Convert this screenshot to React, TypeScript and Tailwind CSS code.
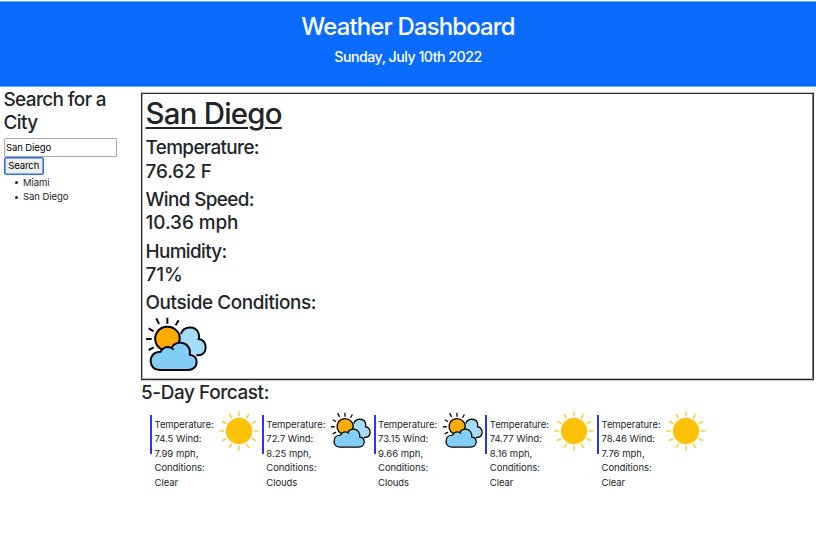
import React from "react";

const forecast = [
  { lines: ["Temperature:", "74.5 Wind:", "7.99 mph,", "Conditions:", "Clear"], clear: true },
  { lines: ["Temperature:", "72.7 Wind:", "8.25 mph,", "Conditions:", "Clouds"], clear: false },
  { lines: ["Temperature:", "73.15 Wind:", "9.66 mph,", "Conditions:", "Clouds"], clear: false },
  { lines: ["Temperature:", "74.77 Wind:", "8.16 mph,", "Conditions:", "Clear"], clear: true },
  { lines: ["Temperature:", "78.46 Wind:", "7.76 mph,", "Conditions:", "Clear"], clear: true },
];

function CloudIcon({ className }: { className: string }) {
  return (
    <svg viewBox="30 88 183 183" className={className} fill="none" stroke="#050505" strokeWidth="6" strokeLinecap="butt">
      <path d="M94 96V114M61 98L69 115M128 104L119 119M38 128L53 137M30 160H47M38 193L53 185" />
      <path
        d="M134 143C142 121 177 119 187 141C190 147 190 152 189 159C203 161 210 173 209 187C208 202 197 210 182 209L165 203L160 186L148 175L128 171Z"
        fill="#a5dcfa"
        stroke="none"
      />
      <path d="M135 145C142 121 177 119 187 141C190 147 190 153 188 160C202 161 210 173 209 187C208 202 197 210 181 209" />
      <path d="M75 190C58 180 52 157 63 140C76 120 105 117 122 135C129 143 133 155 129 168L112 178L96 184L79 198Z" fill="#ffab00" stroke="none" />
      <path d="M77 191C58 181 52 157 63 140C76 120 105 117 122 135C130 143 133 158 129 171" />
      <path
        d="M71 253C55 253 44 242 44 226C44 209 56 198 74 198C79 185 94 180 107 187C113 169 142 165 155 181C161 188 163 197 161 207C174 208 182 217 182 229C182 243 171 253 156 253Z"
        fill="#82cef7"
        strokeLinejoin="round"
      />
      <path d="M105 184L113 193" strokeWidth="4.5" />
    </svg>
  );
}

function SunIcon({ className }: { className: string }) {
  return (
    <svg viewBox="-60 -60 120 120" className={className}>
      <circle r="39.5" fill="#ffc107" />
      <g stroke="#ffce4d" strokeWidth="5" strokeLinecap="round">
        {[0, 30, 60, 90, 120, 150, 180, 210, 240, 270, 300, 330].map((a) => (
          <path key={a} d="M0 -57V-46" transform={`rotate(${a})`} />
        ))}
      </g>
    </svg>
  );
}

function Reading({ label, value }: { label: string; value?: string }) {
  return (
    <h3 className="mb-[4.9px] text-[18.9px] leading-[23.4px] font-medium tracking-[-0.63px]">
      <span className={value ? "block" : "block tracking-[-0.38px]"}>{label}</span>
      {value && <span className="block tracking-[-0.06px]">{value}</span>}
    </h3>
  );
}

export default function App() {
  return (
    <div className="h-[544px] overflow-hidden bg-white font-['Inter','Liberation_Sans',sans-serif] text-[9.5px] leading-[14.65px] text-[#212529]">
      <header className="mt-px h-[86px] border-y border-[#65a3ff] bg-[#0a6cff] pt-[10px] text-center text-white">
        <h1 className="text-[23.9px] leading-[30px] font-medium tracking-[-0.82px]">Weather Dashboard</h1>
        <p className="mt-[6px] text-[14.2px] leading-[18px] font-medium tracking-[-0.5px]">Sunday, July 10th 2022</p>
      </header>
      <div className="flex">
        <aside className="w-[141px] shrink-0 pt-[0.7px] pl-[3.5px]">
          <h2 className="mb-[3.5px] w-[120px] text-[18.9px] leading-[23.4px] font-medium tracking-[-0.6px]">Search for a City</h2>
          <input
            defaultValue="San Diego"
            className="block h-[18.5px] w-[113px] rounded-[1px] border border-[#a8a8a8] bg-white px-[1.5px] text-[9.5px] tracking-[-0.1px] text-black outline-none"
          />
          <button className="block h-[18px] w-[40.5px] rounded-[2px] border border-[#2875e2] bg-[#efefef] text-center text-[9.5px] leading-[16px] tracking-[-0.1px] text-black shadow-[inset_0_0_0_0.6px_#2875e2]">
            Search
          </button>
          <ul className="mt-[1px] pl-[11px] tracking-[-0.05px]">
            {["Miami", "San Diego"].map((city) => (
              <li key={city} className="flex items-center gap-[5.5px]">
                <span className="size-[3px] rounded-full bg-[#212529]" />
                {city}
              </li>
            ))}
          </ul>
        </aside>
        <main className="w-[673px]">
          <section className="mt-[6px] h-[287px] border border-[#2b2b2b] pt-[2px] pl-[3.5px] shadow-[0_-1px_0_#c4c4c4,0_1px_0_#c8c8c8,inset_0_-1px_0_#b4b4b4,inset_1px_0_0_#aaaaaa,inset_-1px_0_0_#777777]">
            <h1 className="mb-[3.6px] text-[29.4px] leading-[36.6px] font-medium tracking-[-0.75px] underline decoration-2 underline-offset-[3px]">
              San Diego
            </h1>
            <Reading label="Temperature:" value="76.62 F" />
            <Reading label="Wind Speed:" value="10.36 mph" />
            <Reading label="Humidity:" value="71%" />
            <Reading label="Outside Conditions:" />
            <CloudIcon className="-mt-[4.5px] size-[61px]" />
          </section>
          <h2 className="mt-[1px] text-[18.9px] leading-[23.4px] font-medium tracking-[-0.38px]">5-Day Forcast:</h2>
          <div className="flex pt-[10.6px] pl-[9px]">
            {forecast.map((day, i) => (
              <div key={i} className="flex h-[39px] w-[111.75px] shrink-0 border-l-2 border-[#2a35ee] pl-[2.6px]">
                <p className="w-[64.6px] shrink-0 pt-[2.5px] whitespace-nowrap">
                  {day.lines.map((line) => (
                    <span key={line} className={line.includes("mph") ? "block" : "block tracking-[-0.08px]"}>
                      {line}
                    </span>
                  ))}
                </p>
                {day.clear ? (
                  <SunIcon className="-mt-[4px] size-[40px] shrink-0" />
                ) : (
                  <CloudIcon className="-mt-[4px] size-[40px] shrink-0" />
                )}
              </div>
            ))}
          </div>
        </main>
      </div>
    </div>
  );
}
